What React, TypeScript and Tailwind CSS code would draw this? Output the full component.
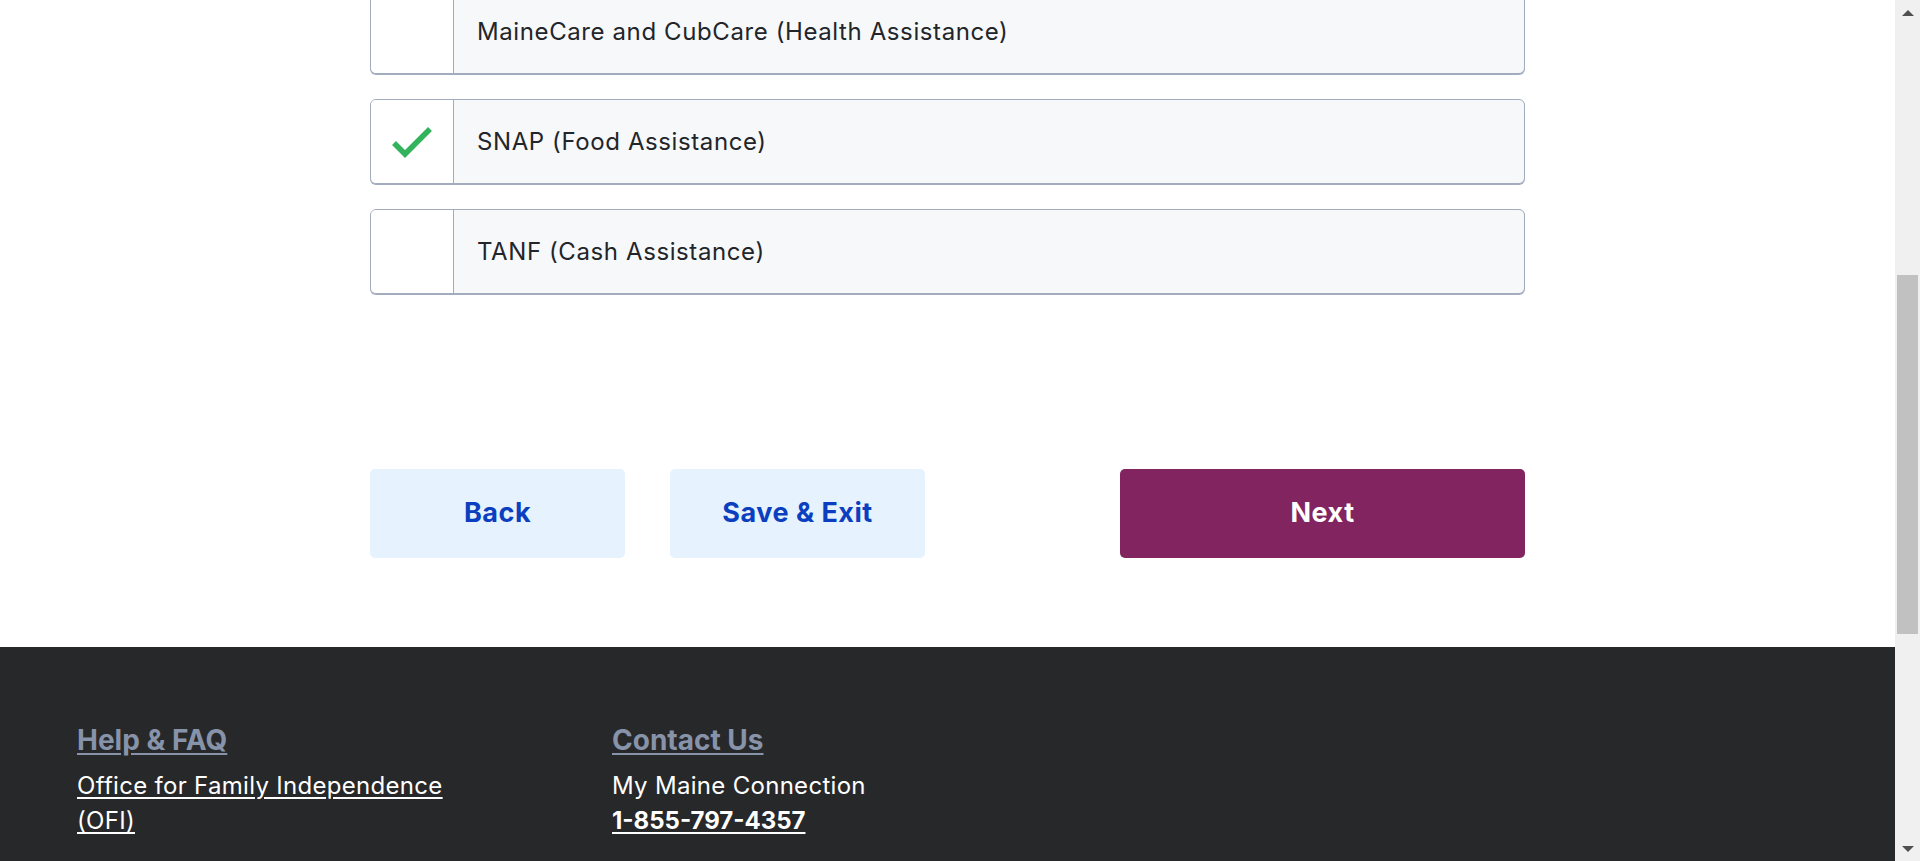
import React from "react";

const programs = [
  { label: "MaineCare and CubCare (Health Assistance)", checked: false },
  { label: "SNAP (Food Assistance)", checked: true },
  { label: "TANF (Cash Assistance)", checked: false },
];

function CheckIcon() {
  return (
    <svg width="42" height="32" viewBox="0 0 42 32" fill="none">
      <path d="M3 17 L14 28 L39 3" stroke="#33b35c" strokeWidth="5.5" strokeLinejoin="miter" />
    </svg>
  );
}

function Scrollbar() {
  return (
    <div className="w-[25px] h-[861px] bg-[#f0f0f0] flex flex-col items-center shrink-0">
      <div className="h-[25px] flex items-center justify-center">
        <div className="w-0 h-0 border-l-[6px] border-r-[6px] border-b-[6px] border-l-transparent border-r-transparent border-b-[#505050]" />
      </div>
      <div className="flex-1 w-full px-[2px] pt-[250px]">
        <div className="h-[359px] w-full bg-[#c1c1c1]" />
      </div>
      <div className="h-[25px] flex items-center justify-center">
        <div className="w-0 h-0 border-l-[6px] border-r-[6px] border-t-[6px] border-l-transparent border-r-transparent border-t-[#505050]" />
      </div>
    </div>
  );
}

export default function App() {
  return (
    <div className="flex h-[861px] overflow-hidden bg-white" style={{ fontFamily: "Inter, 'Open Sans', sans-serif" }}>
      <div className="flex-1 flex flex-col overflow-hidden">
        {/* Program checklist */}
        <main className="w-[1155px] mx-auto -mt-[11px] pb-[89px]">
          <div className="flex flex-col gap-[25px]">
            {programs.map((p) => (
              <div
                key={p.label}
                className="flex h-[85px] rounded-[6px] border border-[#a3acbe] bg-[#f7f8fa] shadow-[0_1px_0_#a3acbe] overflow-hidden"
              >
                <div className="w-[83px] bg-white border-r border-[#a3acbe] flex items-center justify-center">
                  {p.checked && <CheckIcon />}
                </div>
                <div className="flex items-center pl-[23px] text-[24px] tracking-[0.6px] text-[#22252a]">{p.label}</div>
              </div>
            ))}
          </div>

          {/* Actions */}
          <div className="flex mt-[175px]">
            <button className="w-[255px] h-[89px] rounded-[5px] bg-[#e6f2fe] text-[#0b3fbf] text-[27px] tracking-[0.5px] font-bold">
              Back
            </button>
            <button className="w-[255px] h-[89px] ml-[45px] rounded-[5px] bg-[#e6f2fe] text-[#0b3fbf] text-[27px] tracking-[0.5px] font-bold">
              Save &amp; Exit
            </button>
            <button className="w-[405px] h-[89px] ml-auto rounded-[5px] bg-[#82245f] text-white text-[27px] tracking-[0.5px] font-bold">
              Next
            </button>
          </div>
        </main>

        {/* Footer */}
        <footer className="flex-1 bg-[#27282a] px-[77px] pt-[73px]">
          <div className="flex">
            <div className="w-[535px]">
              <a href="#" className="block text-[28px] font-bold text-[#8793a9] underline underline-offset-[3px] leading-[40px]">
                Help &amp; FAQ
              </a>
              <a href="#" className="block w-[410px] mt-[8px] text-[24px] tracking-[0.3px] text-white underline underline-offset-[3px] leading-[35px]">
                Office for Family Independence (OFI)
              </a>
            </div>
            <div>
              <a href="#" className="block text-[28px] font-bold text-[#8793a9] underline underline-offset-[3px] leading-[40px]">
                Contact Us
              </a>
              <p className="mt-[8px] text-[24px] tracking-[0.3px] text-white leading-[35px]">My Maine Connection</p>
              <a href="#" className="block text-[24px] font-bold text-white underline underline-offset-[3px] leading-[35px]">
                1-855-797-4357
              </a>
            </div>
          </div>
        </footer>
      </div>
      <Scrollbar />
    </div>
  );
}
